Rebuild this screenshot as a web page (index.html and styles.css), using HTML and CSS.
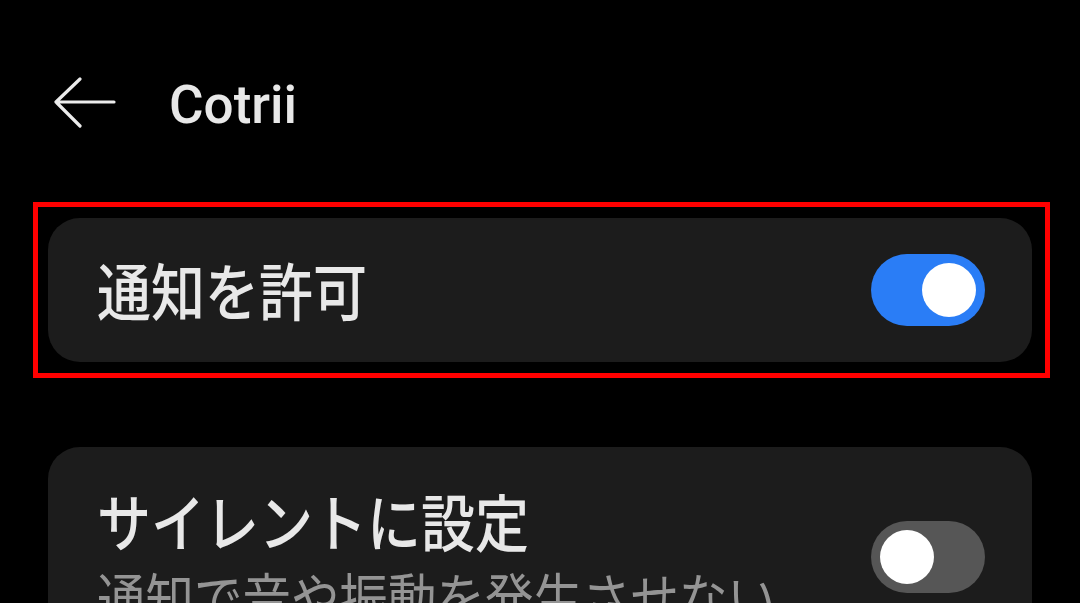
FILE: index.html
```html
<!DOCTYPE html>
<html lang="ja">
<head>
<meta charset="utf-8">
<meta name="viewport" content="width=device-width, initial-scale=1">
<title>Cotrii</title>
<link rel="stylesheet" href="styles.css">
</head>
<body>
<div class="screen">
  <header class="topbar">
    <svg class="back" width="62" height="52" viewBox="0 0 62 52">
      <path d="M60 25 H2 M26 2 L2 25 L26 49" fill="none" stroke="#ececec" stroke-width="3.2" stroke-linecap="round" stroke-linejoin="round"/>
    </svg>
    <h1 class="title">Cotrii</h1>
  </header>

  <div class="mark">
    <div class="card">
      <div class="text">
        <span class="label">通知を許可</span>
      </div>
      <div class="switch on"><i></i></div>
    </div>
  </div>

  <div class="card card-tall">
    <div class="text">
      <span class="label">サイレントに設定</span>
      <span class="sub">通知で音や振動を発生させない</span>
    </div>
    <div class="switch"><i></i></div>
  </div>
</div>
</body>
</html>
```

FILE: styles.css
```css
html, body {
  margin: 0;
  background: #000000;
}
body {
  font-family: "Noto Sans CJK JP", "Noto Sans", sans-serif;
  color: #e8e8e8;
  overflow: hidden;
}
.screen {
  width: 1080px;
  height: 603px;
}
.topbar {
  display: flex;
  align-items: center;
  height: 90px;
  margin-top: 58px;
  padding-left: 54px;
  gap: 53px;
}
.back {
  display: block;
}
.title {
  margin: 0;
  font-family: Roboto, "Liberation Sans", sans-serif;
  font-weight: 500;
  font-size: 53px;
  line-height: 1;
  color: #e8e8e8;
  position: relative;
  top: 2px;
}
.mark {
  margin: 54px 30px 0 33px;
  border: 5px solid #ff0000;
  padding: 11px 13px 11px 10px;
}
.card {
  display: flex;
  align-items: center;
  justify-content: space-between;
  height: 144px;
  box-sizing: border-box;
  padding: 0 47px 0 49px;
  background: #1c1c1c;
  border-radius: 32px;
}
.card-tall {
  height: auto;
  margin: 69px 48px 0 48px;
  padding-top: 38px;
  padding-bottom: 30px;
}
.text {
  display: flex;
  flex-direction: column;
}
.label {
  display: inline-block;
  font-size: 54px;
  line-height: 72px;
  font-weight: 500;
  transform: scaleY(1.15);
}
.sub {
  display: inline-block;
  margin-top: 8px;
  font-size: 48.5px;
  line-height: 64px;
  color: #949494;
  transform: scaleY(1.16);
}
.switch {
  position: relative;
  flex: none;
  width: 114px;
  height: 72px;
  border-radius: 36px;
  background: #565656;
}
.switch i {
  position: absolute;
  top: 9px;
  left: 9px;
  width: 54px;
  height: 54px;
  border-radius: 50%;
  background: #ffffff;
}
.switch.on {
  background: #2a7df6;
}
.switch.on i {
  left: auto;
  right: 9px;
}
```
